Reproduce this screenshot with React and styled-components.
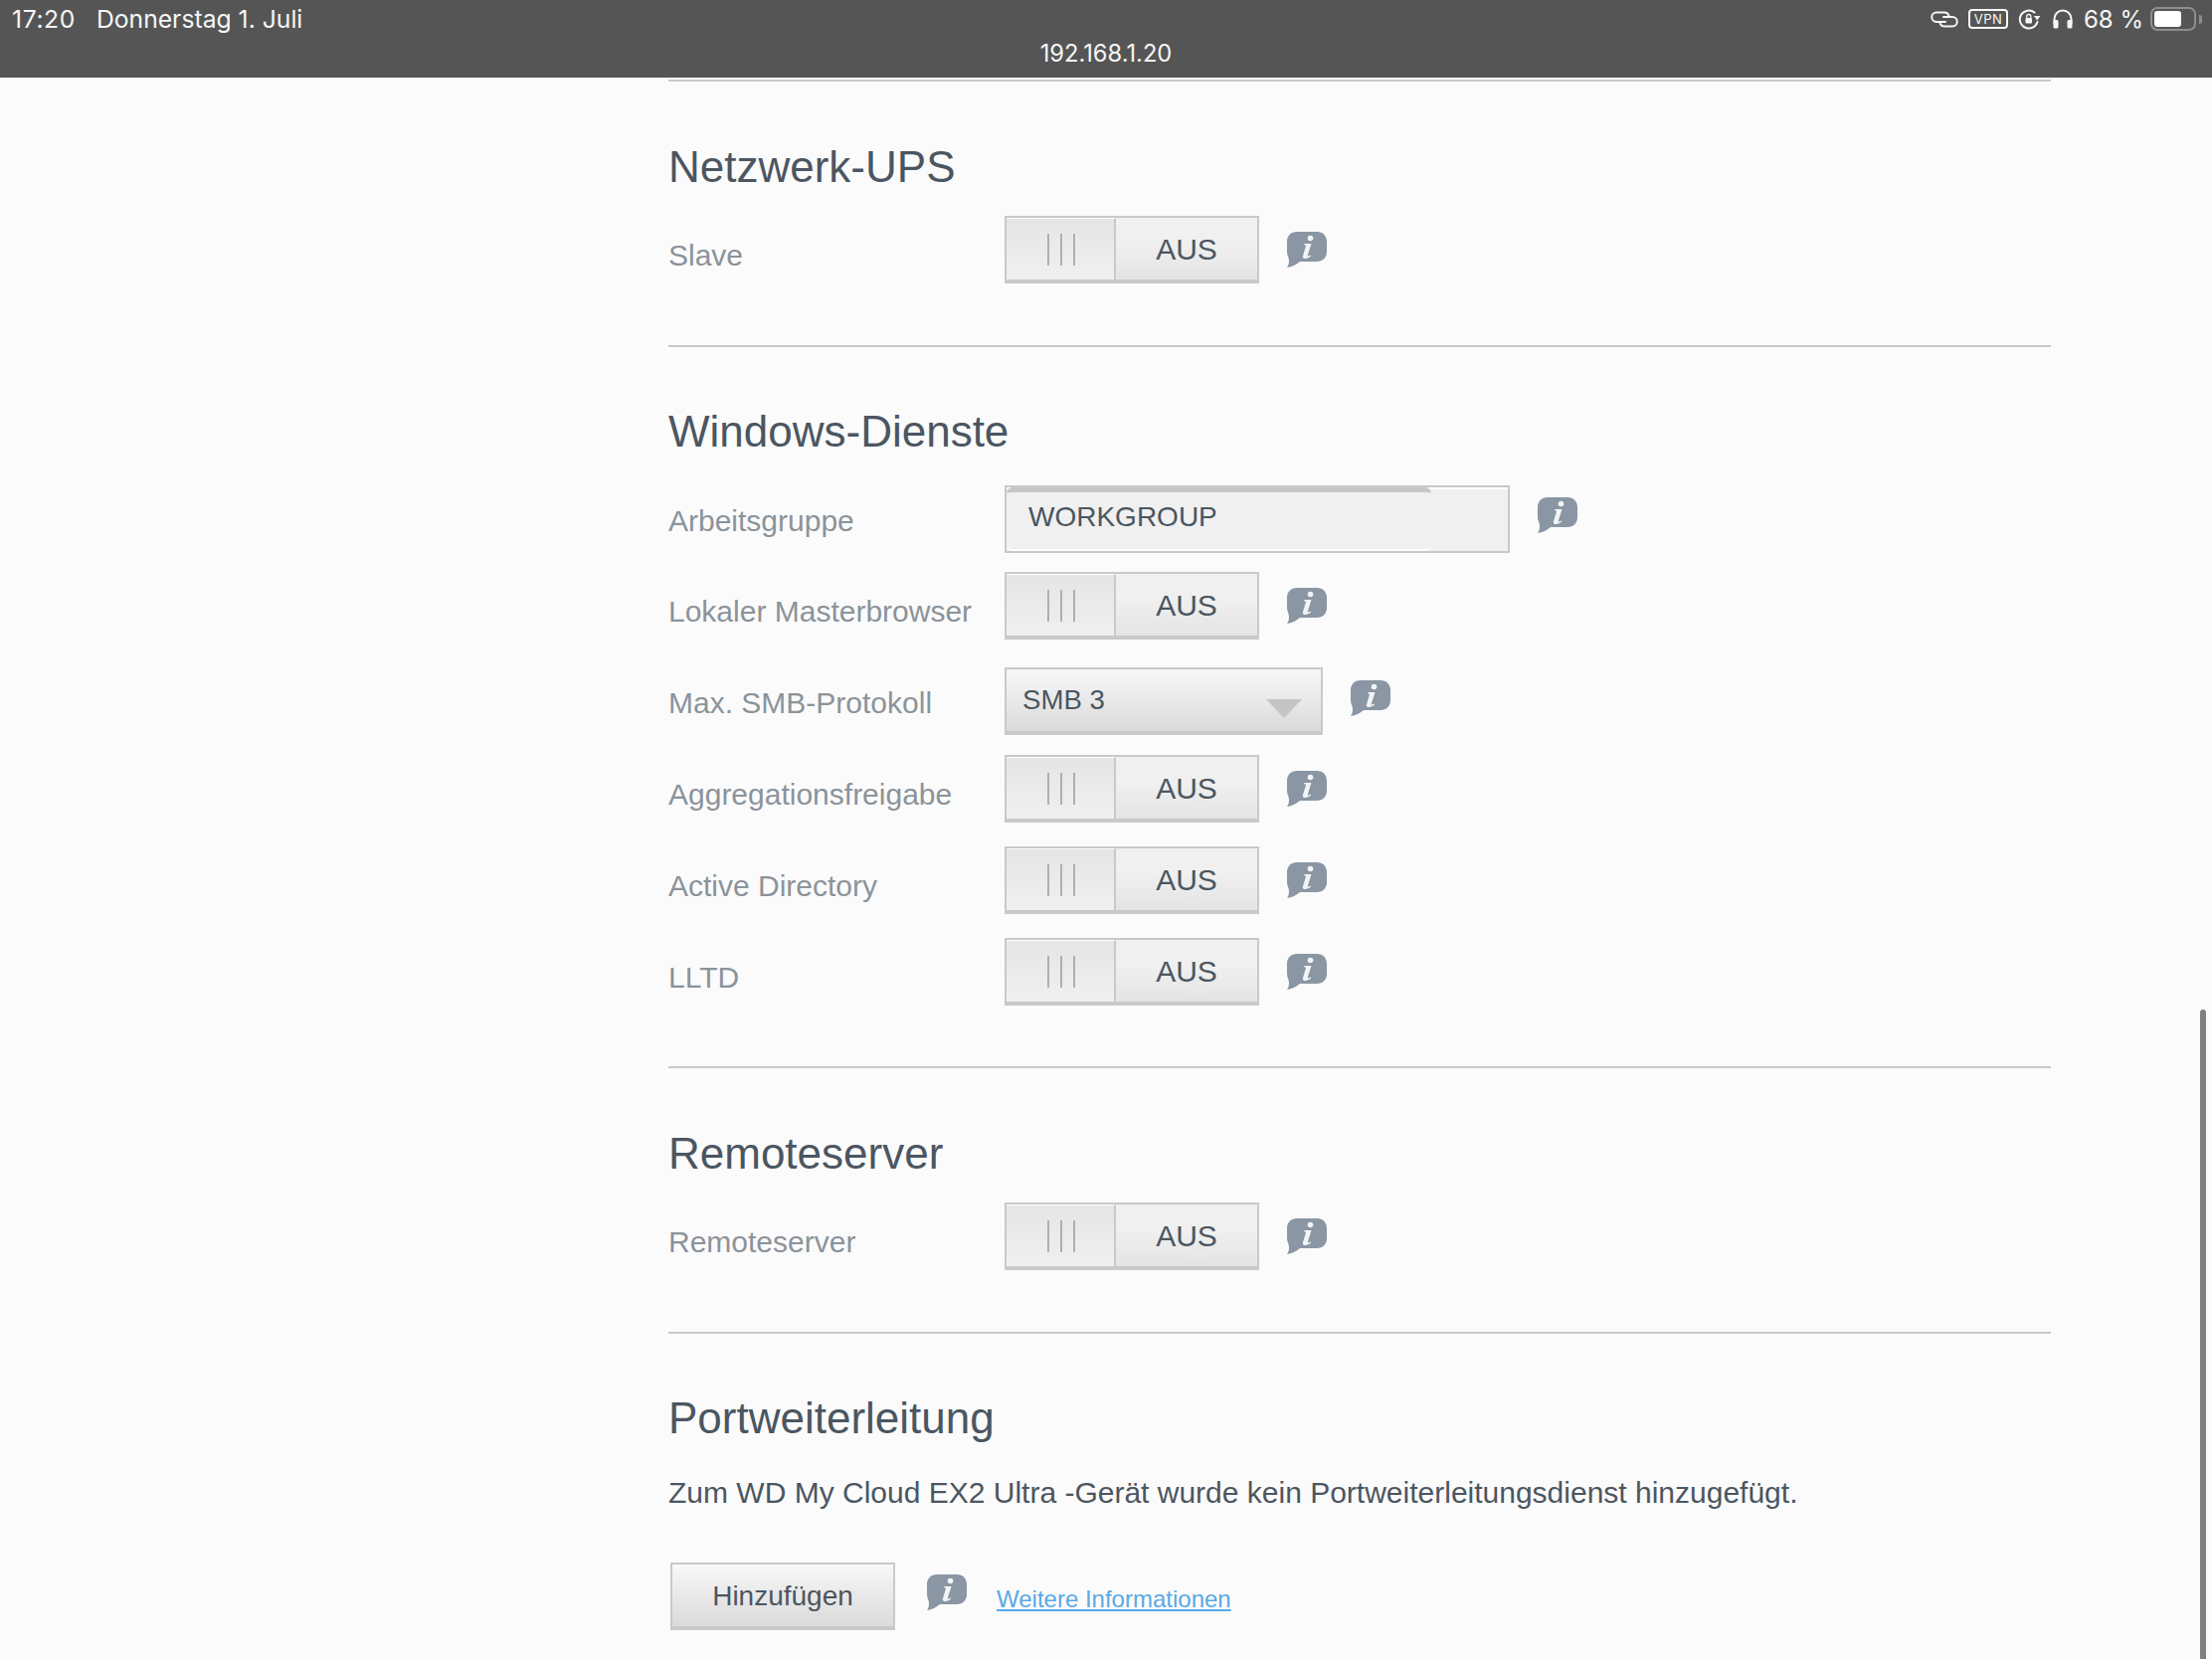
import React from 'react'
import styled, { createGlobalStyle } from 'styled-components'

const Global = createGlobalStyle`
    html, body {
        margin: 0;
        padding: 0;
        background: #fbfbfb;
    }
    body {
        font-family: "Liberation Sans", Arial, sans-serif;
    }
`

const Screen = styled.div`
    position: relative;
    width: 2224px;
    height: 1668px;
    overflow: hidden;
    background: #fbfbfb;
`

const StatusBar = styled.header`
    height: 78px;
    background: #555555;
    color: #f6f6f6;
    font-family: Inter, "Noto Sans", sans-serif;
    display: flex;
    flex-direction: column;
`
const StatusRow = styled.div`
    height: 38px;
    padding: 0 10px 0 12px;
    display: flex;
    align-items: center;
    justify-content: space-between;
    font-size: 24.7px;
`
const StatusLeft = styled.div`
    display: flex;
    gap: 21px;
`
const Clock = styled.span`
    letter-spacing: 0.6px;
`
const StatusRight = styled.div`
    display: flex;
    align-items: center;
`
const Address = styled.div`
    padding-top: 2px;
    text-align: center;
    font-size: 23.7px;
    line-height: 28px;
`
const VpnBadge = styled.span`
    box-sizing: border-box;
    width: 40px;
    height: 20px;
    margin: 0 10px;
    border: 2px solid #f6f6f6;
    border-radius: 4px;
    font-size: 13px;
    line-height: 16px;
    letter-spacing: 0.5px;
    text-align: center;
`
const Percent = styled.span`
    margin: 0 7px 0 10px;
    font-size: 24px;
`
const Battery = styled.span`
    box-sizing: border-box;
    width: 46px;
    height: 24px;
    padding: 2px;
    border: 2px solid #8e8e8e;
    border-radius: 7px;
    display: flex;
`
const BatteryFill = styled.span`
    width: 27px;
    border-radius: 3px;
    background: #ffffff;
`
const BatteryNub = styled.span`
    width: 3px;
    height: 9px;
    margin-left: 3px;
    border-radius: 0 3px 3px 0;
    background: #8e8e8e;
`

const Main = styled.main`
    width: 1390px;
    margin-left: 672px;
`
const Section = styled.section`
    padding: ${props => props.$top || 0}px 0 ${props => props.$bottom || 0}px;
    border-bottom: ${props => props.$last ? 'none' : '2px solid #c9c9c9'};
`
const Heading = styled.h2`
    margin: 0 0 ${props => props.$gap || 20}px;
    font-size: 44px;
    line-height: 60px;
    font-weight: 400;
    color: #4b5661;
`
const Row = styled.div`
    display: flex;
    align-items: center;
    margin-top: ${props => props.$gap || 0}px;
`
const Label = styled.span`
    width: 338px;
    padding-top: ${props => props.$drop ?? 12}px;
    font-size: 30px;
    line-height: 36px;
    color: #8b939a;
    white-space: nowrap;
`

const Switch = styled.div`
    box-sizing: border-box;
    width: 256px;
    height: 68px;
    display: flex;
    border: 2px solid #c9c9c9;
    border-bottom-width: 4px;
`
const Handle = styled.div`
    box-sizing: border-box;
    width: 110px;
    padding-left: 2px;
    display: flex;
    align-items: center;
    justify-content: center;
    gap: 11px;
    border-top: 1px solid #ffffff;
    border-right: 2px solid #c9c9c9;
    background: linear-gradient(#e5e5e5, #f0f0f0);
`
const Grip = styled.i`
    width: 2px;
    height: 32px;
    background: #abb0b5;
`
const SwitchText = styled.div`
    flex: 1;
    text-align: center;
    font-size: 30px;
    line-height: 64px;
    color: #4b5661;
    background: linear-gradient(#f0f0f0 40%, #e4e4e4);
`

const Field = styled.div`
    box-sizing: border-box;
    width: 508px;
    height: 68px;
    display: flex;
    border: 2px solid #c9c9c9;
    background: #f0f0f0;
    box-shadow: inset 0 2px 0 #ffffff;
`
const FieldValue = styled.div`
    box-sizing: border-box;
    width: 427px;
    padding-left: 22px;
    border-top: 5px solid #c6c6c6;
    border-bottom: 2px solid #ffffff;
    border-radius: 6px;
    background: #f0f0f0;
    font-size: 28px;
    line-height: 50px;
    color: #4b5661;
`

const Select = styled.div`
    box-sizing: border-box;
    width: 320px;
    height: 68px;
    padding: 0 19px 0 16px;
    display: flex;
    align-items: center;
    justify-content: space-between;
    border: 2px solid #c9c9c9;
    border-bottom-width: 4px;
    background: linear-gradient(#f8f8f8, #dadada);
    font-size: 27.6px;
    color: #4b5661;
`
const Arrow = styled.span`
    width: 0;
    height: 0;
    margin-top: 17px;
    border-style: solid;
    border-width: 19px 18px 0;
    border-color: #c4c4c4 transparent transparent;
`

const Info = styled.svg`
    flex: none;
    width: 40px;
    height: 36px;
    margin-left: ${props => props.$left || 28}px;
    margin-bottom: ${props => props.$lift || 0}px;
`

const Sentence = styled.p`
    margin: 0;
    font-size: 30px;
    line-height: 36px;
    color: #4b5661;
`
const Button = styled.button`
    box-sizing: border-box;
    width: 226px;
    height: 68px;
    margin-left: 2px;
    padding: 2px 0 0;
    border: 2px solid #c9c9c9;
    border-bottom-width: 4px;
    border-radius: 0;
    background: linear-gradient(#f8f8f8, #dadada);
    font: 400 28px "Liberation Sans", Arial, sans-serif;
    color: #4b5661;
`
const MoreLink = styled.a`
    margin: 6px 0 0 30px;
    font-size: 24px;
    color: #5aa9e6;
    text-decoration: underline;
`

const ScrollThumb = styled.div`
    position: absolute;
    right: 6px;
    top: 1015px;
    bottom: 0;
    width: 6px;
    border-radius: 3px 3px 0 0;
    background: #808080;
`

const InfoIcon = ({ left, lift }) => (
    <Info viewBox="0 0 40 36" $left={left} $lift={lift}>
        <path
            fill="#8a96a3"
            d="M10 0H30C36 0 40 4 40 10V20C40 26 36 30 30 30H13C9 33 5 35.5 0 36C2 33 2.5 30 1.5 26C0.5 24 0 22 0 20V10C0 4 4 0 10 0Z"
        />
        <circle cx="23.5" cy="6.5" r="2.8" fill="#f2f4f5" />
        <path
            fill="#f2f4f5"
            d="M17.5 12H24.5L20.8 23.8C20.5 25 21.8 24.8 23.5 23.6L24.2 24.6C22.2 26.4 19.2 27.4 17.2 27C15.8 26.6 15.6 25.2 16.1 23.8L18.9 14.6C19.1 13.6 18.4 13.2 17 13.2Z"
        />
    </Info>
)

const Toggle = () => (
    <Switch>
        <Handle>
            <Grip />
            <Grip />
            <Grip />
        </Handle>
        <SwitchText>AUS</SwitchText>
    </Switch>
)

const ToggleRow = ({ label, gap }) => (
    <Row $gap={gap}>
        <Label>{label}</Label>
        <Toggle />
        <InfoIcon />
    </Row>
)

const LinkIcon = () => (
    <svg width="28" height="17" viewBox="0 0 28 17" fill="none" stroke="#f6f6f6" strokeWidth="2" strokeLinecap="round">
        <path d="M15 11H6A4.7 4.7 0 0 1 6 1.5H14A4.7 4.7 0 0 1 18.5 5" />
        <path d="M13 6H22A4.7 4.7 0 0 1 22 15.5H14A4.7 4.7 0 0 1 9.5 12" />
    </svg>
)

const RotationLock = () => (
    <svg width="23" height="22" viewBox="0 0 23 22" fill="none">
        <path d="M16.5 4.5A9 9 0 1 0 19.5 14" stroke="#f6f6f6" strokeWidth="2" strokeLinecap="round" />
        <path d="M16 8H22.5L19.2 12.5Z" fill="#f6f6f6" />
        <rect x="7.5" y="10" width="6.5" height="5.5" rx="1" fill="#f6f6f6" />
        <path d="M8.8 10V8.5A2 2 0 0 1 12.8 8.5V10" stroke="#f6f6f6" strokeWidth="1.3" />
    </svg>
)

const Headphones = () => (
    <svg width="22" height="20" viewBox="0 0 22 20" fill="none" style={{ marginLeft: 11 }}>
        <path d="M2.5 15V10A8.5 8.5 0 0 1 19.5 10V15" stroke="#f6f6f6" strokeWidth="2" />
        <rect x="1.5" y="11" width="5" height="8.5" rx="1.5" fill="#f6f6f6" />
        <rect x="15.5" y="11" width="5" height="8.5" rx="1.5" fill="#f6f6f6" />
    </svg>
)

const App = () => (
    <Screen>
        <Global />
        <StatusBar>
            <StatusRow>
                <StatusLeft>
                    <Clock>17:20</Clock>
                    <span>Donnerstag 1. Juli</span>
                </StatusLeft>
                <StatusRight>
                    <LinkIcon />
                    <VpnBadge>VPN</VpnBadge>
                    <RotationLock />
                    <Headphones />
                    <Percent>68 %</Percent>
                    <Battery>
                        <BatteryFill />
                    </Battery>
                    <BatteryNub />
                </StatusRight>
            </StatusRow>
            <Address>192.168.1.20</Address>
        </StatusBar>
        <Main>
            <Section $top={2} />
            <Section $top={56} $bottom={62}>
                <Heading $gap={19}>Netzwerk-UPS</Heading>
                <ToggleRow label="Slave" />
            </Section>
            <Section $top={55} $bottom={61}>
                <Heading $gap={24}>Windows-Dienste</Heading>
                <Row>
                    <Label $drop={4}>Arbeitsgruppe</Label>
                    <Field>
                        <FieldValue>WORKGROUP</FieldValue>
                    </Field>
                    <InfoIcon lift={8} />
                </Row>
                <ToggleRow label="Lokaler Masterbrowser" gap={19} />
                <Row $gap={28}>
                    <Label $drop={3}>Max. SMB-Protokoll</Label>
                    <Select>
                        SMB 3
                        <Arrow />
                    </Select>
                    <InfoIcon lift={7} />
                </Row>
                <ToggleRow label="Aggregationsfreigabe" gap={20} />
                <ToggleRow label="Active Directory" gap={24} />
                <ToggleRow label="LLTD" gap={24} />
            </Section>
            <Section $top={56} $bottom={62}>
                <Heading $gap={19}>Remoteserver</Heading>
                <ToggleRow label="Remoteserver" />
            </Section>
            <Section $top={55} $last>
                <Heading $gap={27}>Portweiterleitung</Heading>
                <Sentence>Zum WD My Cloud EX2 Ultra -Gerät wurde kein Portweiterleitungsdienst hinzugefügt.</Sentence>
                <Row $gap={52}>
                    <Button>Hinzufügen</Button>
                    <InfoIcon left={32} lift={8} />
                    <MoreLink href="#">Weitere Informationen</MoreLink>
                </Row>
            </Section>
        </Main>
        <ScrollThumb />
    </Screen>
)

export default App
